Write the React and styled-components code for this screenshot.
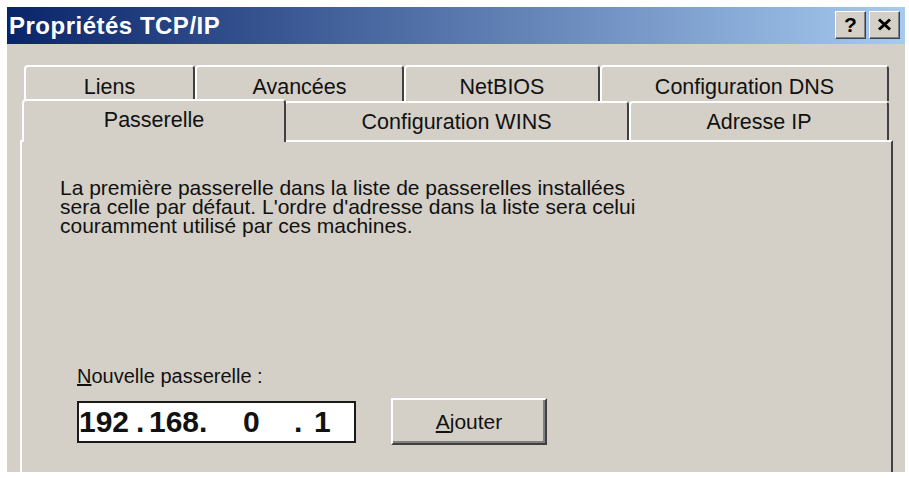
import React from "react";
import styled, { createGlobalStyle } from "styled-components";

const backRow = [
  { label: "Liens", width: 171 },
  { label: "Avancées", width: 209 },
  { label: "NetBIOS", width: 196 },
  { label: "Configuration DNS", width: 289 },
];

const frontRow = [
  { label: "Passerelle", width: 260, active: true },
  { label: "Configuration WINS", width: 345 },
  { label: "Adresse IP", width: 260 },
];

// the ip control draws each field in its own cell
const ipParts = [
  { text: "192", width: 57 },
  { text: ".", width: 13 },
  { text: "168", width: 46 },
  { text: ".", width: 44 },
  { text: "0", width: 51 },
  { text: ".", width: 20 },
  { text: "1", width: 30 },
];

const App = () => {
  return (
    <>
      <GlobalStyle />
      <Page>
        <Dialog>
          <TitleBar>
            <Title>Propriétés TCP/IP</Title>
            <Caption>
              <CaptionButton>?</CaptionButton>
              <CaptionButton>
                <svg width="15" height="13" viewBox="0 0 15 13">
                  <path
                    d="M2 1.5 L13 11.5 M13 1.5 L2 11.5"
                    stroke="#000"
                    strokeWidth="3"
                    fill="none"
                  />
                </svg>
              </CaptionButton>
            </Caption>
          </TitleBar>
          <Body>
            <TabStrip>
              <TabRow $height={36}>
                {backRow.map((tab) => (
                  <Tab key={tab.label} $width={tab.width} $back>
                    {tab.label}
                  </Tab>
                ))}
              </TabRow>
              <TabRow $height={39}>
                {frontRow.map((tab) => (
                  <Tab key={tab.label} $width={tab.width} $active={tab.active}>
                    {tab.label}
                  </Tab>
                ))}
              </TabRow>
            </TabStrip>
            <Panel>
              <Description>
                La première passerelle dans la liste de passerelles installées
                <br />
                sera celle par défaut. L'ordre d'adresse dans la liste sera celui
                <br />
                couramment utilisé par ces machines.
              </Description>
              <Field>
                <Label>
                  <u>N</u>ouvelle passerelle :
                </Label>
                <FieldRow>
                  <IpBox>
                    {ipParts.map((part, i) => (
                      <IpPart key={i} $width={part.width}>
                        {part.text}
                      </IpPart>
                    ))}
                  </IpBox>
                  <PushButton>
                    <u>A</u>jouter
                  </PushButton>
                </FieldRow>
              </Field>
            </Panel>
          </Body>
        </Dialog>
      </Page>
    </>
  );
};

const GlobalStyle = createGlobalStyle`
  html, body {
    margin: 0;
    background: #ffffff;
  }
  body {
    font-family: "Liberation Sans", Arial, sans-serif;
    color: #111;
  }
`;

const Page = styled.div`
  padding: 7px 4px 0 7px;
`;

const Dialog = styled.div`
  width: 898px;
  height: 465px;
  background: #d4d0c8;
  display: flex;
  flex-direction: column;
  overflow: hidden;
`;

const TitleBar = styled.div`
  height: 37px;
  flex: none;
  display: flex;
  align-items: center;
  padding: 0 5px 0 2px;
  background: linear-gradient(to right, #0a246a, #a6caf0);
`;

const Title = styled.div`
  color: #fff;
  font-weight: bold;
  font-size: 24px;
  letter-spacing: 0.5px;
  line-height: 1;
`;

const Caption = styled.div`
  margin-left: auto;
  display: flex;
  gap: 3px;
  margin-top: -2px;
`;

const CaptionButton = styled.div`
  width: 31px;
  height: 28px;
  box-sizing: border-box;
  display: flex;
  align-items: center;
  justify-content: center;
  background: #d4d0c8;
  border: 1px solid;
  border-color: #fff #404040 #404040 #fff;
  box-shadow: inset -1px -1px #808080;
  font-weight: bold;
  font-size: 21px;
  color: #000;
`;

const Body = styled.div`
  flex: 1;
  display: flex;
  flex-direction: column;
  padding: 21px 12px 0 13px;
  min-height: 0;
`;

const TabStrip = styled.div`
  margin: 0 4px;
  display: flex;
  flex-direction: column;
`;

const TabRow = styled.div`
  height: ${(p) => p.$height}px;
  display: flex;
  align-items: flex-start;
`;

const Tab = styled.div`
  flex: 0 0 ${(p) => (p.$active ? p.$width + 4 : p.$width)}px;
  height: ${(p) => (p.$active ? "calc(100% + 4px)" : "100%")};
  margin: ${(p) => (p.$active ? "-2px -2px 0" : "0")};
  padding: ${(p) => (p.$back ? "6px 0 0" : p.$active ? "0 0 4px" : "0")};
  box-sizing: border-box;
  position: relative;
  z-index: ${(p) => (p.$active ? 1 : 0)};
  display: flex;
  align-items: center;
  justify-content: center;
  background: #d4d0c8;
  border-top: 2px solid #fff;
  border-left: 2px solid #fff;
  border-right: 2px solid #404040;
  border-radius: 4px 4px 0 0;
  font-size: 21.5px;
  line-height: 24px;
  white-space: nowrap;
`;

const Panel = styled.div`
  flex: 1;
  box-sizing: border-box;
  border-top: 2px solid #fff;
  border-left: 2px solid #fff;
  border-right: 2px solid #404040;
  padding: 36px 0 0 38px;
`;

const Description = styled.p`
  margin: 0;
  font-size: 21px;
  line-height: 19px;
  white-space: nowrap;
`;

const Field = styled.div`
  margin: 132px 0 0 17px;
`;

const Label = styled.div`
  font-size: 20px;
  line-height: 18px;
`;

const FieldRow = styled.div`
  margin-top: 13px;
  display: flex;
  align-items: center;
  gap: 35px;
`;

const IpBox = styled.div`
  width: 279px;
  height: 42px;
  box-sizing: border-box;
  display: flex;
  align-items: center;
  background: #fff;
  border: 2px solid #1a1a1a;
  font-weight: bold;
  font-size: 30px;
  color: #111;
`;

const IpPart = styled.span`
  flex: 0 0 ${(p) => p.$width}px;
  white-space: pre;
`;

const PushButton = styled.div`
  width: 156px;
  height: 47px;
  box-sizing: border-box;
  display: flex;
  align-items: center;
  justify-content: center;
  background: #d4d0c8;
  border: 2px solid;
  border-color: #fff #404040 #404040 #fff;
  box-shadow: inset -2px -2px #808080;
  font-size: 21px;
`;

export default App;
